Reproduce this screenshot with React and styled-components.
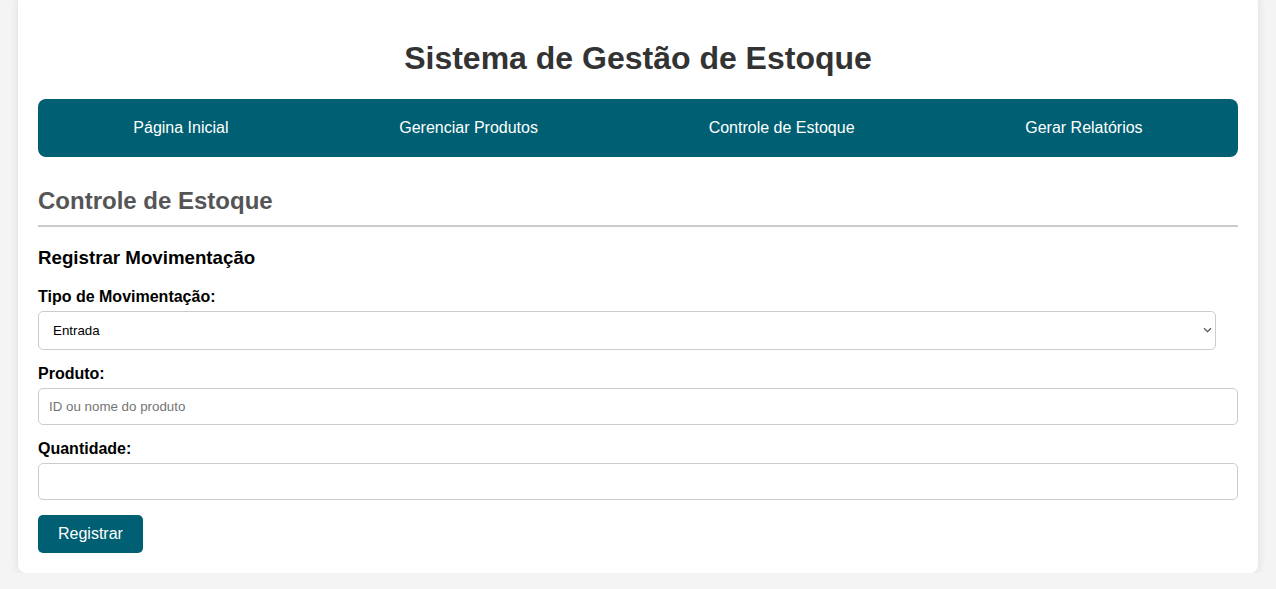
import React from "react";
import styled, { createGlobalStyle } from "styled-components";

const Global = createGlobalStyle`
  html, body {
    margin: 0;
    padding: 0;
    background: #f4f4f4;
    font-family: "Liberation Sans", Arial, sans-serif;
  }
  * { box-sizing: border-box; }
`;

const Container = styled.div`
  width: 1240px;
  margin: -5px auto 0;
  padding: 20px;
  background: #fff;
  border-radius: 8px;
  box-shadow: 0 0 10px rgba(0, 0, 0, 0.1);
`;

const Title = styled.h1`
  margin: 25px 0 22px;
  font-size: 32px;
  line-height: 37px;
  font-weight: bold;
  text-align: center;
  color: #333;
`;

const Nav = styled.nav`
  display: flex;
  justify-content: space-around;
  align-items: center;
  padding: 10px;
  background: #005f73;
  border-radius: 8px;
`;

const NavLink = styled.a`
  padding: 10px 15px;
  color: #fff;
  font-size: 16px;
  line-height: 18px;
  text-decoration: none;
  cursor: pointer;
`;

const SectionTitle = styled.h2`
  margin: 30px 0 0;
  padding-bottom: 11px;
  font-size: 24px;
  line-height: 27px;
  font-weight: bold;
  color: #555;
  border-bottom: 2px solid #ccc;
`;

const SubTitle = styled.h3`
  margin: 20px 0 19px;
  font-size: 18.72px;
  line-height: 21px;
  font-weight: bold;
  color: #000;
`;

const Form = styled.form`
  display: flex;
  flex-direction: column;
  align-items: flex-start;
`;

const Label = styled.label`
  display: block;
  margin-bottom: 4px;
  font-size: 16px;
  line-height: 20px;
  font-weight: bold;
  color: #000;
`;

const Field = styled.div`
  width: 100%;
  margin-bottom: ${(p) => (p.$last ? "15px" : "14px")};
`;

const SelectWrap = styled.div`
  position: relative;
  width: calc(100% - 22px);
`;

const Select = styled.select`
  display: block;
  width: 100%;
  height: 39px;
  padding: 10px 30px 10px 14px;
  border: 1px solid #ccc;
  border-radius: 5px;
  background: #fff;
  appearance: none;
  -webkit-appearance: none;
  font-family: "Liberation Sans", Arial, sans-serif;
  font-size: 13.33px;
  color: #000;
`;

const Chevron = styled.svg`
  position: absolute;
  right: 4px;
  top: 16px;
  width: 9px;
  height: 6px;
  pointer-events: none;
`;

const Input = styled.input`
  display: block;
  width: 100%;
  height: 37px;
  padding: 10px;
  border: 1px solid #ccc;
  border-radius: 5px;
  background: #fff;
  font-family: "Liberation Sans", Arial, sans-serif;
  font-size: 13.33px;
  color: #000;
  &::placeholder {
    color: #757575;
  }
`;

const Button = styled.button`
  padding: 10px 20px;
  border: none;
  border-radius: 5px;
  background: #005f73;
  color: #fff;
  font-family: "Liberation Sans", Arial, sans-serif;
  font-size: 16px;
  line-height: 18px;
  cursor: pointer;
`;

const links = ["Página Inicial", "Gerenciar Produtos", "Controle de Estoque", "Gerar Relatórios"];

export default function App() {
  return (
    <>
      <Global />
      <Container>
        <Title>Sistema de Gestão de Estoque</Title>
        <Nav>
          {links.map((l) => (
            <NavLink key={l}>{l}</NavLink>
          ))}
        </Nav>
        <SectionTitle>Controle de Estoque</SectionTitle>
        <SubTitle>Registrar Movimentação</SubTitle>
        <Form onSubmit={(e) => e.preventDefault()}>
          <Field>
            <Label htmlFor="tipo">Tipo de Movimentação:</Label>
            <SelectWrap>
              <Select id="tipo" defaultValue="entrada">
                <option value="entrada">Entrada</option>
                <option value="saida">Saída</option>
              </Select>
              <Chevron viewBox="0 0 9 6" fill="none">
                <path d="M1 1.2 L4.5 4.6 L8 1.2" stroke="#555" strokeWidth="1.3" />
              </Chevron>
            </SelectWrap>
          </Field>
          <Field>
            <Label htmlFor="produto">Produto:</Label>
            <Input id="produto" type="text" placeholder="ID ou nome do produto" />
          </Field>
          <Field $last>
            <Label htmlFor="quantidade">Quantidade:</Label>
            <Input id="quantidade" type="number" />
          </Field>
          <Button type="submit">Registrar</Button>
        </Form>
      </Container>
    </>
  );
}
